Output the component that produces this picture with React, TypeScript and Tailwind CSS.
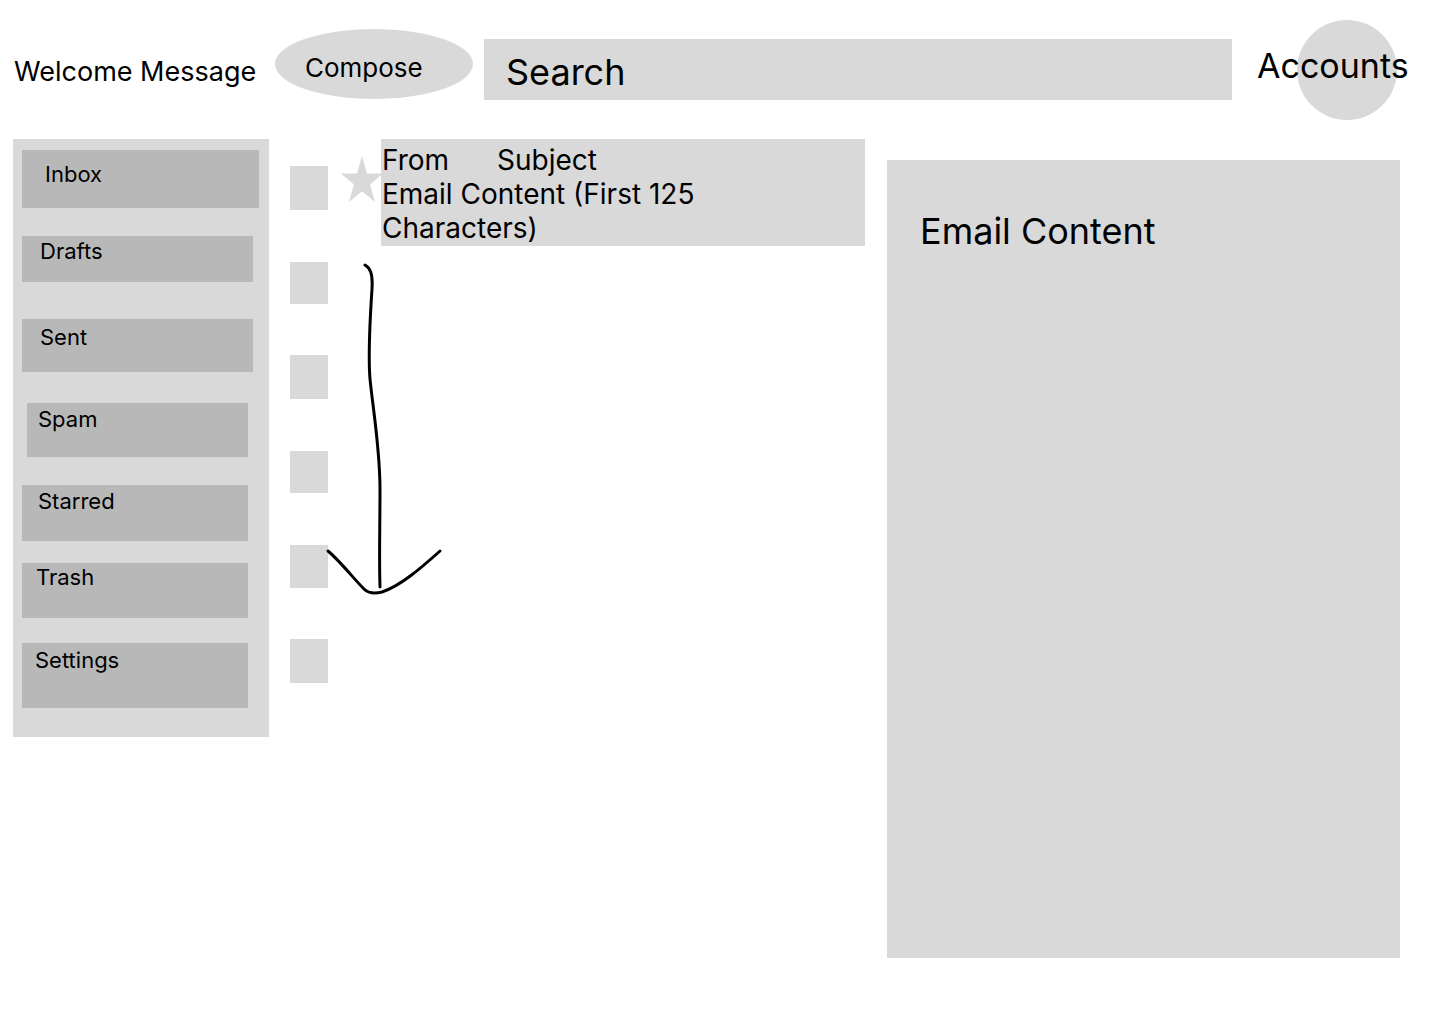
import { FC } from "react";

const folders = [
    { name: "Inbox", box: "ml-[9px] mt-[11px] w-[237px] h-[58px] pl-[23px] pt-[13px]" },
    { name: "Drafts", box: "ml-[9px] mt-[28px] w-[231px] h-[46px] pl-[18px] pt-[4px]" },
    { name: "Sent", box: "ml-[9px] mt-[37px] w-[231px] h-[53px] pl-[18px] pt-[7px]" },
    { name: "Spam", box: "ml-[14px] mt-[31px] w-[221px] h-[54px] pl-[11px] pt-[5px]" },
    { name: "Starred", box: "ml-[9px] mt-[28px] w-[226px] h-[56px] pl-[16px] pt-[5px]" },
    { name: "Trash", box: "ml-[9px] mt-[22px] w-[226px] h-[55px] pl-[14px] pt-[3px]" },
    { name: "Settings", box: "ml-[9px] mt-[25px] w-[226px] h-[65px] pl-[13px] pt-[6px]" },
]

// checkboxes below the first row
const boxes = [
    "mt-[16px] h-[42px]",
    "mt-[51px] h-[44px]",
    "mt-[52px] h-[42px]",
    "mt-[52px] h-[43px]",
    "mt-[51px] h-[44px]",
]

const Star: FC = () => {
    return <svg className="w-[42px] h-[46px] ml-[13px] mt-[17px] shrink-0" viewBox="2.45 0 95.1 90.45" preserveAspectRatio="none">
        <polygon
            fill="#d9d9d9"
            points="50,0 61.23,34.55 97.55,34.55 68.17,55.9 79.39,90.45 50,69.1 20.61,90.45 31.83,55.9 2.45,34.55 38.77,34.55"
        />
    </svg>
}

const Sidebar: FC = () => {
    return <div className="flex flex-col ml-[13px] w-[256px] h-[598px] shrink-0 bg-[#d9d9d9]">
        {
            folders.map(folder => {
                return <div key={folder.name} className={"bg-[#b8b8b8] text-[22px] leading-[22px] " + folder.box}>
                    {folder.name}
                </div>
            })
        }
    </div>
}

const EmailList: FC = () => {
    return <div className="relative flex flex-col ml-[21px] w-[575px] shrink-0">
        <div className="flex items-start">
            <div className="w-[38px] h-[44px] mt-[27px] shrink-0 bg-[#d9d9d9]" />
            <Star />
            <div className="w-[484px] h-[107px] ml-[-2px] shrink-0 bg-[#d9d9d9] pl-[1px] pt-[4px] text-[28px] leading-[34px]">
                <span className="inline-block w-[115px]">From</span>Subject
                <br />
                Email Content (First 125
                <br />
                Characters)
            </div>
        </div>
        {
            boxes.map((b, i) => {
                return <div key={i} className={"w-[38px] bg-[#d9d9d9] " + b} />
            })
        }

        {/* scroll arrow sketch */}
        <svg className="absolute left-0 top-0 w-[200px] h-[480px] pointer-events-none" viewBox="0 0 200 480" fill="none">
            <path
                d="M75 126 C80 129 83 134 82 150 C80 180 78 215 80 240 C83 270 90 310 90 350 C90 390 89 420 90 448"
                stroke="black"
                strokeWidth="3"
                strokeLinecap="round"
            />
            <path
                d="M38 412 C50 422 64 440 74 450 C78 454 84 455 92 453 C110 447 130 430 150 412"
                stroke="black"
                strokeWidth="3"
                strokeLinecap="round"
            />
        </svg>
    </div>
}

const App: FC = () => {
    return <div className="w-[1440px] h-[1024px] bg-white text-black overflow-hidden" style={{ fontFamily: "Inter, 'Noto Sans', sans-serif" }}>
        <div className="flex items-start h-[120px]">
            <div className="w-[275px] pl-[14px] mt-[55px] text-[27px] leading-[33px] whitespace-nowrap shrink-0">
                Welcome Message
            </div>
            <div className="w-[198px] h-[70px] mt-[29px] pl-[30px] pt-[23px] rounded-[50%] bg-[#d9d9d9] text-[26px] leading-[31px] shrink-0">
                Compose
            </div>
            <div className="w-[748px] h-[61px] ml-[11px] mt-[39px] pl-[22px] pt-[11px] bg-[#d9d9d9] text-[36px] leading-[44px] shrink-0">
                Search
            </div>
            <div className="relative ml-[25px] h-[120px] shrink-0">
                <div className="absolute left-[40px] top-[20px] w-[100px] h-[100px] rounded-full bg-[#d9d9d9]" />
                <div className="relative pt-[49px] text-[34px] leading-[34px]">Accounts</div>
            </div>
        </div>

        <div className="flex items-start mt-[19px]">
            <Sidebar />
            <EmailList />
            <div className="w-[513px] h-[798px] ml-[22px] mt-[21px] shrink-0 bg-[#d9d9d9] pl-[33px] pt-[53px] text-[36px] leading-[36px]">
                Email Content
            </div>
        </div>
    </div>
}

export default App
